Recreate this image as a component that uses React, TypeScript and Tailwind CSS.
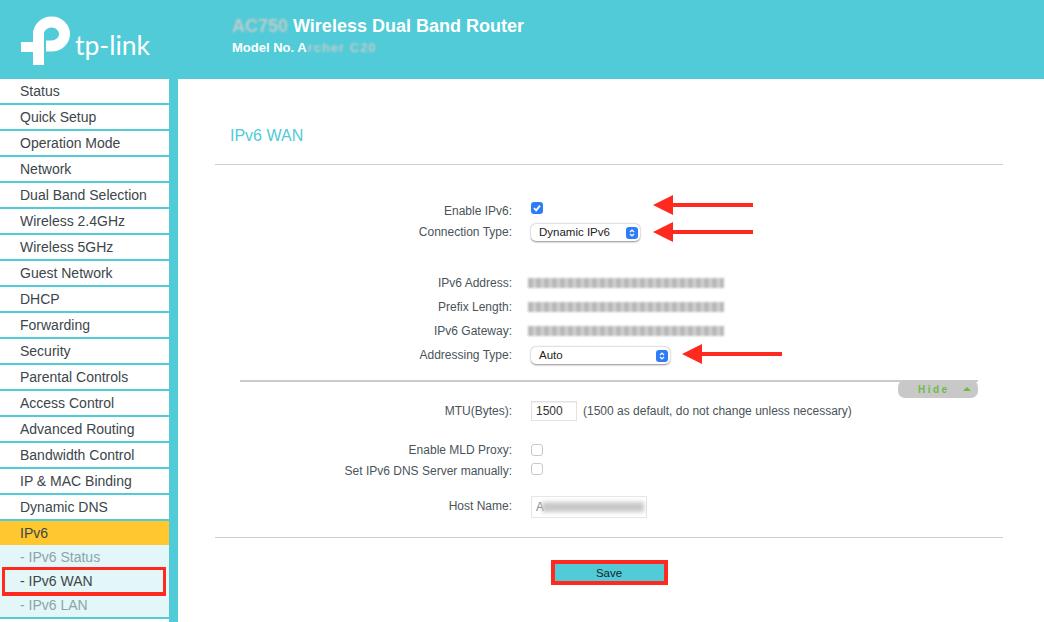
const menu = [
  'Status',
  'Quick Setup',
  'Operation Mode',
  'Network',
  'Dual Band Selection',
  'Wireless 2.4GHz',
  'Wireless 5GHz',
  'Guest Network',
  'DHCP',
  'Forwarding',
  'Security',
  'Parental Controls',
  'Access Control',
  'Advanced Routing',
  'Bandwidth Control',
  'IP & MAC Binding',
  'Dynamic DNS',
]

function Logo() {
  return (
    <svg width="50" height="50" viewBox="0 0 50 50" fill="none" className="shrink-0">
      <path d="M17.5 26 V18 A13 12 0 1 1 30 30 H25" stroke="white" strokeWidth="11" />
      <path d="M0 26 H23 V49 H12 V36 H0 Z" fill="white" />
    </svg>
  )
}

function Arrow({ width, className }: { width: number; className: string }) {
  return (
    <svg width={width} height="20" viewBox={`0 0 ${width} 20`} className={`absolute ${className}`}>
      <path d={`M0 10 L20 0 V8 H${width} V12 H20 V20 Z`} fill="#ff2a1f" />
    </svg>
  )
}

function Stepper() {
  return (
    <span className="flex h-[12px] w-[12px] items-center justify-center rounded-[3px] bg-[#2f7df6]">
      <svg width="8" height="10" viewBox="0 0 8 10" fill="none" stroke="white" strokeWidth="1.2">
        <path d="M2 4 L4 2 L6 4 M2 6 L4 8 L6 6" />
      </svg>
    </span>
  )
}

function Select({ label, width }: { label: string; width: string }) {
  return (
    <div className={`flex h-[17px] translate-y-[1px] items-center justify-between rounded-[5px] bg-white pl-[8px] pr-[2px] text-[11.5px] text-[#222] shadow-[0_0.5px_2px_rgba(0,0,0,0.45)] ${width}`}>
      <span>{label}</span>
      <Stepper />
    </div>
  )
}

function Row({ label, className = '', children }: { label: string; className?: string; children?: React.ReactNode }) {
  return (
    <div className={`flex items-center gap-[19px] ${className}`}>
      <div className="w-[334px] shrink-0 text-right text-[12px] text-[#4a5459]">{label}</div>
      {children}
    </div>
  )
}

function Masked() {
  return (
    <div className="-ml-[3px] h-[10px] w-[196px] bg-[repeating-linear-gradient(90deg,#b8b8b8_0_5px,#d2d2d2_5px_8px)] blur-[1.3px]" />
  )
}

function EmptyCheck() {
  return <div className="h-[12px] w-[12px] rounded-[3px] border border-[#c9c9c9] bg-white" />
}

export default function App() {
  return (
    <div className="flex h-[622px] w-[1044px] flex-col overflow-hidden bg-[#50cbd7] font-['Liberation_Sans',Arial,sans-serif]">
      <header className="flex h-[79px] shrink-0">
        <div className="flex w-[232px] shrink-0 items-start pl-[21px] pt-[16px]">
          <Logo />
          <span className="ml-[4px] mt-[12px] font-['Lato',sans-serif] text-[26.5px] leading-[34px] text-white">tp-link</span>
        </div>
        <div className="pt-[15px] font-bold text-white">
          <div className="flex items-center text-[18px] leading-[23px]">
            <span className="mr-[5px] text-[#c0cccc] blur-[1.2px]">AC750</span>
            Wireless Dual Band Router
          </div>
          <div className="mt-[1px] flex items-center text-[13px] leading-[17px]">
            Model No. A
            <span className="ml-[1px] tracking-[1px] text-[#c0cccc] blur-[1.2px]">rcher C20</span>
          </div>
        </div>
      </header>

      <div className="flex min-h-0 flex-1">
        <nav className="flex w-[169px] shrink-0 flex-col gap-[2px] text-[14px] text-[#3c464b]">
          {menu.map((item) => (
            <div key={item} className="flex h-[24px] shrink-0 items-center bg-white pl-[20px]">{item}</div>
          ))}
          <div className="flex h-[24px] shrink-0 items-center bg-[#ffc82e] pl-[20px]">IPv6</div>
          <div className="-mt-[2px] flex shrink-0 flex-col bg-[#e3f6f8] text-[#8aa5aa]">
            <div className="flex h-[24px] items-center pl-[20px]">- IPv6 Status</div>
            <div className="relative flex h-[24px] items-center pl-[20px] text-[#3c464b]">
              - IPv6 WAN
              <div className="absolute -top-[2px] bottom-[-3px] left-[2px] right-[3px] border-[3px] border-b-4 border-[#ff2a1f]" />
            </div>
            <div className="flex h-[24px] items-center pl-[20px]">- IPv6 LAN</div>
          </div>
          <div className="h-[4px] shrink-0 bg-white" />
        </nav>

        <main className="relative ml-[9px] flex min-w-0 flex-1 flex-col bg-white pl-[37px]">
          <h1 className="ml-[15px] mt-[48px] text-[16px] leading-[18px] text-[#50cbd7]">IPv6 WAN</h1>
          <div className="mt-[19px] h-px w-[788px] bg-[#cfcfcf]" />

          <div className="-ml-[37px] flex flex-col">
            <Row label="Enable IPv6:" className="mt-[37px] h-[17px]">
              <span className="flex h-[12px] w-[12px] -translate-y-[3px] items-center justify-center rounded-[3px] bg-[#2f7df6]">
                <svg width="10" height="10" viewBox="0 0 10 10" fill="none" stroke="white" strokeWidth="1.8">
                  <path d="M2 5.2 L4.2 7.4 L8 2.6" />
                </svg>
              </span>
            </Row>
            <Row label="Connection Type:" className="mt-[4px] h-[17px]">
              <Select label="Dynamic IPv6" width="w-[109px]" />
            </Row>
            <Row label="IPv6 Address:" className="mt-[34px] h-[17px]"><Masked /></Row>
            <Row label="Prefix Length:" className="mt-[7px] h-[17px]"><Masked /></Row>
            <Row label="IPv6 Gateway:" className="mt-[7px] h-[17px]"><Masked /></Row>
            <Row label="Addressing Type:" className="mt-[7px] h-[17px]">
              <Select label="Auto" width="w-[139px]" />
            </Row>
          </div>

          <div className="relative ml-[25px] mt-[17px] h-[2px] w-[738px] bg-[#cbcbcb]">
            <div className="absolute right-0 top-0 flex h-[18px] w-[80px] items-center rounded-[7px] bg-[#c8c8c8] pl-[20px] text-[10px] font-bold tracking-[2.5px] text-[#6dbb45]">
              Hide
              <svg width="8" height="4" viewBox="0 0 8 4" className="ml-[13px]"><path d="M0 4 L4 0 L8 4 Z" fill="#6dbb45" /></svg>
            </div>
          </div>

          <div className="-ml-[37px] flex flex-col">
            <Row label="MTU(Bytes):" className="mt-[19px] h-[20px]">
              <div className="flex h-[20px] w-[46px] items-center border border-[#e2e2e2] pl-[4px] text-[12px] text-[#333] shadow-[inset_0_1px_1px_rgba(0,0,0,0.06)]">1500</div>
              <span className="-ml-[13px] text-[12px] text-[#4a5459]">(1500 as default, do not change unless necessary)</span>
            </Row>
            <Row label="Enable MLD Proxy:" className="mt-[20px] h-[17px]"><EmptyCheck /></Row>
            <Row label="Set IPv6 DNS Server manually:" className="mt-[4px] h-[17px]">
              <div className="-translate-y-[2px]"><EmptyCheck /></div>
            </Row>
            <Row label="Host Name:" className="mt-[16px] h-[22px]">
              <div className="flex h-[22px] w-[116px] translate-y-[1px] items-center border border-[#e6e6e6] pl-[4px] text-[12px] text-[#888]">
                A
                <span className="-ml-[2px] h-[10px] w-[102px] bg-[#c8c8c8] blur-[2px]" />
              </div>
            </Row>
          </div>

          <div className="mt-[20px] h-px w-[788px] bg-[#cfcfcf]" />

          <div className="mt-[22px] flex w-[788px] justify-center">
            <button className="h-[25px] w-[117px] border-[4px] border-[#ff2a1f] bg-[#50cbd7] pt-[2px] text-[11.5px] leading-[13px] text-[#222]">Save</button>
          </div>

          <Arrow width={100} className="left-[475px] top-[116px]" />
          <Arrow width={100} className="left-[475px] top-[143px]" />
          <Arrow width={100} className="left-[504px] top-[265px]" />
        </main>
      </div>
    </div>
  )
}
